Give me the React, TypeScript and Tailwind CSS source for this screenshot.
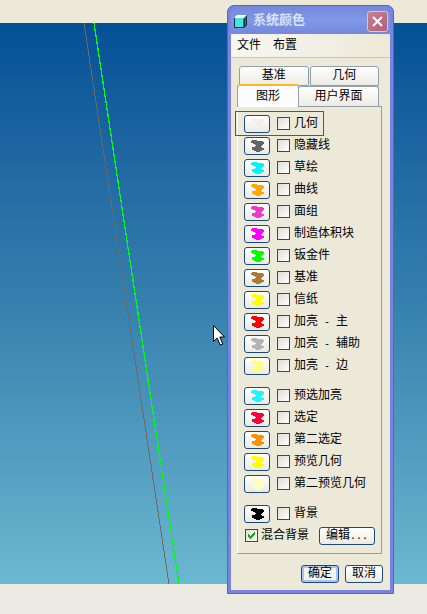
import { useState } from "react";

interface ColorItem {
  id: string;
  label: string;
  suffix?: string;
  color: string;
}

const geometryColors: ColorItem[] = [
  { id: "geometry", label: "几何", color: "#f0f0ee" },
  { id: "hidden", label: "隐藏线", color: "#646464" },
  { id: "sketch", label: "草绘", color: "#00f4ff" },
  { id: "curve", label: "曲线", color: "#ffa800" },
  { id: "quilt", label: "面组", color: "#f038c8" },
  { id: "volume", label: "制造体积块", color: "#ff00ff" },
  { id: "sheetmetal", label: "钣金件", color: "#00ff00" },
  { id: "datum", label: "基准", color: "#b07838" },
  { id: "letter", label: "信纸", color: "#ffff00" },
  { id: "highlight-primary", label: "加亮", suffix: "主", color: "#ff0000" },
  { id: "highlight-secondary", label: "加亮", suffix: "辅助", color: "#b4b4b4" },
  { id: "highlight-edge", label: "加亮", suffix: "边", color: "#ffff80" },
];

const selectionColors: ColorItem[] = [
  { id: "preselect", label: "预选加亮", color: "#20f4ff" },
  { id: "selected", label: "选定", color: "#f80038" },
  { id: "second-selected", label: "第二选定", color: "#ff9000" },
  { id: "preview", label: "预览几何", color: "#ffff00" },
  { id: "second-preview", label: "第二预览几何", color: "#ffffc0" },
];

const backgroundColors: ColorItem[] = [
  { id: "background", label: "背景", color: "#000000" },
];

const buttonClass =
  "h-[18px] rounded-[3px] border border-[#1c4a80] bg-linear-to-b from-white to-[#eceae2] leading-4";

const tabClass =
  "rounded-t-[3px] border border-[#91a0ac] bg-linear-to-b from-white to-[#ecebe3] text-center leading-[18px]";

const Swatch = ({ color }: { color: string }) => (
  <svg width="13" height="12" viewBox="0 0 13 12" fill={color} shapeRendering="crispEdges">
    <path d="M1 0H6V1H12V2H13V4H12V5H11V6H10V7H11V8H13V10H11V11H9V12H5V11H3V10H1V7H4V6H5V5H4V4H2V3H0V1H1Z" />
  </svg>
);

const CheckBox = ({
  id,
  checked,
  onChange,
}: {
  id: string;
  checked: boolean;
  onChange: () => void;
}) => (
  <span className="relative mb-px flex size-[13px] shrink-0">
    <input
      id={id}
      type="checkbox"
      checked={checked}
      onChange={onChange}
      className="size-[13px] appearance-none border border-[#1c5180] bg-linear-to-br from-[#dcdcd7] to-white"
    />
    {checked && (
      <svg
        className="pointer-events-none absolute left-0 top-0"
        width="13"
        height="13"
        viewBox="0 0 13 13"
        fill="#21a121"
        shapeRendering="crispEdges"
      >
        <path d="M3 5H4V6H5V7H6V6H7V5H8V4H9V3H10V6H9V7H8V8H7V9H6V10H5V9H4V8H3Z" />
      </svg>
    )}
  </span>
);

const ColorRow = ({ item, marked }: { item: ColorItem; marked?: boolean }) => {
  const [checked, setChecked] = useState(false);

  return (
    <li className="relative flex h-[22px] items-center">
      <button
        type="button"
        aria-label={item.label}
        className={`${buttonClass} flex w-[26px] items-center justify-center`}
      >
        <Swatch color={item.color} />
      </button>
      <span className="ml-[7px] flex">
        <CheckBox id={item.id} checked={checked} onChange={() => setChecked(!checked)} />
      </span>
      <label htmlFor={item.id} className="ml-1 whitespace-pre leading-4">
        {item.label}
        {item.suffix && <span className="text-[10px]">{" - "}</span>}
        {item.suffix}
      </label>
      {marked && (
        <span className="pointer-events-none absolute -left-[9px] -top-[2px] h-[25px] w-[89px] ring-1 ring-inset ring-[#ff1010]" />
      )}
    </li>
  );
};

const Viewport = () => (
  <main className="relative flex-1 bg-linear-to-b from-[#045096] via-[#3680ae] to-[#6cb8d0]">
    <svg
      className="absolute inset-0 size-full"
      viewBox="0 0 427 561"
      preserveAspectRatio="none"
      shapeRendering="crispEdges"
    >
      <line x1="84" y1="0" x2="169" y2="561" stroke="#6a6a6a" />
      <line x1="94" y1="0" x2="179" y2="561" stroke="#00f81c" strokeWidth="1.3" />
    </svg>
    <svg className="absolute left-[213px] top-[302px]" width="12" height="21" viewBox="0 0 12 21">
      <path
        d="M.5 .5V16.5L4.2 13L7.2 20L9.8 19L6.8 12H11.5Z"
        fill="#fff"
        stroke="#000"
      />
    </svg>
  </main>
);

const ColorDialog = () => {
  const [blend, setBlend] = useState(true);

  return (
    <section className="absolute left-[227px] top-[5px] w-[167px] rounded-t-[7px] border border-[#5a62c8] bg-[#7984e0] px-[3px] pb-[3px] text-xs text-black">
      <header className="flex h-7 items-center rounded-t-[6px] bg-linear-to-b from-[#7488dc] via-[#8098e6] to-[#7488dc] pl-[3px] pr-[2px] pt-[2px]">
        <svg width="13" height="13" viewBox="0 0 13 13">
          <path d="M0 3L3 0H13L10 3Z" fill="#f4ffff" />
          <path d="M10 3L13 0V10L10 13Z" fill="#187878" />
          <path d="M0 3H10V13H0Z" fill="#44e4e4" />
          <path d="M.5 3V12.5H10L12.5 10V.5" fill="none" stroke="#103038" />
          <path d="M10 3.5V12" stroke="#000" />
        </svg>
        <h1 className="ml-[6px] flex-1 text-[13px] font-bold leading-4 text-[#d8e2fa]">系统颜色</h1>
        <button
          type="button"
          aria-label="关闭"
          className="flex size-[21px] items-center justify-center rounded-[3px] border border-[#d8c4e0] bg-linear-to-br from-[#c88090] to-[#b06078]"
        >
          <svg width="11" height="11" viewBox="0 0 11 11" stroke="#fff" strokeWidth="2">
            <path d="M1 1L10 10M10 1L1 10" />
          </svg>
        </button>
      </header>

      <div className="bg-[#ece9d8]">
        <nav className="flex h-6 gap-3 border-b border-[#c8c5b5] bg-linear-to-r from-[#f8f7f2] to-[#ece9d8] px-[6px] leading-5">
          <button type="button">文件</button>
          <button type="button">布置</button>
        </nav>

        <div className="pb-[7px] pl-[6px] pr-2 pt-2">
          <div role="tablist" className="pr-[3px]">
            <div className="grid grid-cols-2 gap-px pl-[2px]">
              <button type="button" role="tab" className={`${tabClass} h-5`}>
                基准
              </button>
              <button type="button" role="tab" className={`${tabClass} h-5`}>
                几何
              </button>
            </div>
            <div className="relative -mt-[2px] flex items-end">
              <button
                type="button"
                role="tab"
                aria-selected="true"
                className="-mb-px h-[23px] w-[62px] rounded-t-[3px] border border-t-2 border-b-0 border-[#91a0ac] border-t-[#ffb42a] bg-[#fcfcfe] text-center leading-[18px]"
              >
                图形
              </button>
              <button type="button" role="tab" className={`${tabClass} h-5 flex-1 border-b-0 border-l-0`}>
                用户界面
              </button>
            </div>
          </div>

          <div className="border border-[#91a0ac] border-l-white px-[6px] py-[6px]">
            <ul>
              {geometryColors.map((item, i) => (
                <ColorRow key={item.id} item={item} marked={i === 0} />
              ))}
            </ul>
            <ul className="mt-2">
              {selectionColors.map((item) => (
                <ColorRow key={item.id} item={item} />
              ))}
            </ul>
            <ul className="mt-2">
              {backgroundColors.map((item) => (
                <ColorRow key={item.id} item={item} />
              ))}
            </ul>
            <div className="flex h-[22px] items-center pl-px">
              <CheckBox id="blend" checked={blend} onChange={() => setBlend(!blend)} />
              <label htmlFor="blend" className="ml-[3px] flex-1 whitespace-nowrap leading-4">
                混合背景
              </label>
              <button type="button" className={`${buttonClass} w-14`}>
                编辑<span className="text-[10px]">...</span>
              </button>
            </div>
          </div>

          <footer className="-mr-px mt-[11px] flex justify-end gap-[6px]">
            <button
              type="button"
              className="h-[18px] w-[38px] rounded-[3px] border border-[#1c4a80] bg-[#f4f3ee] leading-4 shadow-[inset_0_0_0_2px_#a8c4f0]"
            >
              确定
            </button>
            <button type="button" className={`${buttonClass} w-[38px]`}>
              取消
            </button>
          </footer>
        </div>
      </div>
    </section>
  );
};

const App = () => {
  return (
    <div className="relative flex min-h-screen flex-col bg-[#ece9d8] font-['Liberation_Mono','Noto_Sans_CJK_SC',monospace]">
      <div className="h-[23px]" />
      <Viewport />
      <div className="h-[30px] bg-[#ebebe4]" />
      <ColorDialog />
    </div>
  );
};

export default App;
